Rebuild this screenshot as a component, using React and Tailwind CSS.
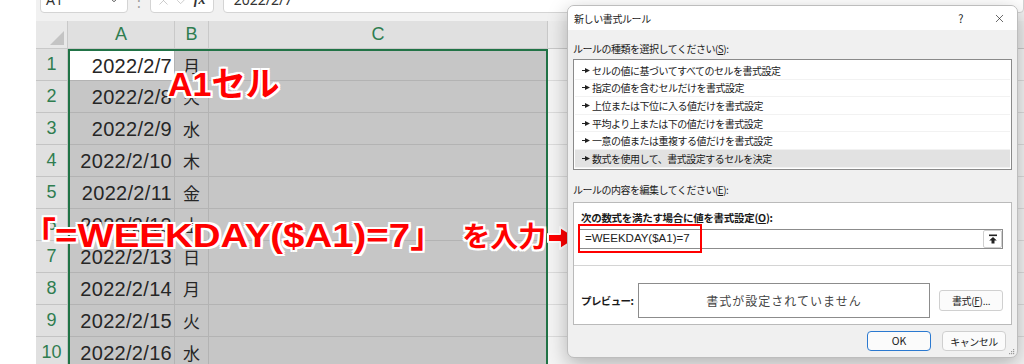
import { Fragment } from 'react';
import { ChevronDown, Check, X } from 'lucide-react';

const rows = [
  ['2022/2/7', '月'],
  ['2022/2/8', '火'],
  ['2022/2/9', '水'],
  ['2022/2/10', '木'],
  ['2022/2/11', '金'],
  ['2022/2/12', '土'],
  ['2022/2/13', '日'],
  ['2022/2/14', '月'],
  ['2022/2/15', '火'],
  ['2022/2/16', '水'],
];

const rules = [
  'セルの値に基づいてすべてのセルを書式設定',
  '指定の値を含むセルだけを書式設定',
  '上位または下位に入る値だけを書式設定',
  '平均より上または下の値だけを書式設定',
  '一意の値または重複する値だけを書式設定',
  '数式を使用して、書式設定するセルを決定',
];

const redText =
  "font-['Liberation_Sans','Noto_Sans_CJK_JP',sans-serif] font-bold leading-none text-[#ff0000] [text-shadow:2px_0_#fff,-2px_0_#fff,0_2px_#fff,0_-2px_#fff,2px_2px_#fff,-2px_-2px_#fff,2px_-2px_#fff,-2px_2px_#fff]";

function FormulaBar() {
  return (
    <div className="flex h-[21px] shrink-0 items-start gap-[9px] overflow-hidden pl-[4px] text-[14px] text-[#333]">
      <div className="-mt-[10px] flex h-[23px] w-[88px] items-end justify-between rounded-[4px] border border-[#d4d4d4] bg-white pb-[2px] pl-[5px] pr-[6px]">
        <span>A1</span>
        <ChevronDown size={14} strokeWidth={1.5} className="mb-[3px]" />
      </div>
      <span className="-mt-[8px] text-[#999]">:</span>
      <div className="-mt-[10px] flex h-[23px] w-[64px] items-end gap-[4px] rounded-[4px] border border-[#d4d4d4] bg-white pb-[2px] pl-[5px]">
        <X size={15} strokeWidth={1.2} className="mb-[2px] text-[#bcbcbc]" />
        <Check size={15} strokeWidth={1.2} className="mb-[2px] text-[#bcbcbc]" />
        <span className="font-['Liberation_Serif',serif] font-bold italic">fx</span>
      </div>
      <div className="-mt-[10px] flex h-[23px] flex-1 items-end rounded-[4px] border border-[#d4d4d4] bg-white pb-[2px] pl-[10px]">
        2022/2/7
      </div>
    </div>
  );
}

function Sheet() {
  return (
    <div className="flex min-h-0 flex-1 flex-col font-['Liberation_Sans','Noto_Sans_CJK_JP',sans-serif]">
      <div className="flex h-[28px] shrink-0 text-[18px] text-[#2f7d50]">
        <div className="relative w-[32px] border-b border-r border-[#c9c9c9] bg-[#e8e8e8]">
          <svg className="absolute bottom-[3px] right-[3px]" width="14" height="14">
            <polygon points="14,0 14,14 0,14" fill="#c4c4c4" />
          </svg>
        </div>
        <div className="flex w-[107px] items-center justify-center border-b border-r border-[#c9c9c9] bg-[#e0e0e0]">A</div>
        <div className="flex w-[34px] items-center justify-center border-b border-r border-[#c9c9c9] bg-[#e0e0e0]">B</div>
        <div className="flex w-[339px] items-center justify-center border-b border-r border-[#c9c9c9] bg-[#e0e0e0]">C</div>
        <div className="flex-1 border-b border-[#c9c9c9] bg-[#ededed]" />
      </div>

      <div className="flex min-h-0 flex-1 overflow-hidden">
        <div className="flex w-[32px] shrink-0 flex-col">
          {rows.map((_, i) => (
            <div
              key={i}
              className="flex h-[32px] shrink-0 items-center justify-center border-b border-r border-[#c4c4c4] bg-[#e0e0e0] text-[18px] text-[#2f7d50]"
            >
              {i + 1}
            </div>
          ))}
        </div>

        <div className="w-[480px] shrink-0 border-x-2 border-t-2 border-[#217346] bg-[#c6c6c6]">
          <div className="grid grid-cols-[105px_34px_1fr]">
            {rows.map(([date, day], i) => (
              <Fragment key={date}>
                <div
                  className={`flex items-center justify-end border-b border-r border-[#b3b3b3] pr-[2px] text-[20px] tracking-[0.3px] text-[#262626] ${
                    i === 0 ? 'h-[30px] bg-white' : 'h-[32px]'
                  }`}
                >
                  {date}
                </div>
                <div
                  className={`flex items-center justify-center border-b border-r border-[#b3b3b3] font-['Noto_Sans_CJK_JP',sans-serif] text-[17px] text-[#262626] ${
                    i === 0 ? 'h-[30px]' : 'h-[32px]'
                  }`}
                >
                  {day}
                </div>
                <div className={`border-b border-[#b3b3b3] ${i === 0 ? 'h-[30px]' : 'h-[32px]'}`} />
              </Fragment>
            ))}
          </div>
        </div>

        <div className="flex flex-1 flex-col bg-[#f4f4f4]">
          {rows.map((_, i) => (
            <div key={i} className="h-[32px] shrink-0 border-b border-[#dcdcdc]" />
          ))}
        </div>
      </div>
    </div>
  );
}

function Dialog() {
  return (
    <div className="absolute left-[567px] top-[5px] flex h-[353px] w-[451px] flex-col overflow-hidden rounded-[7px] border border-[#bdbdbd] bg-[#f0f0f0] font-['Noto_Sans_CJK_JP',sans-serif] text-[#1a1a1a] shadow-[0_6px_20px_rgba(0,0,0,0.28)]">
      <div className="flex h-[24px] shrink-0 items-center bg-white pl-[6px] text-[10px] tracking-[-0.4px]">
        <span className="flex-1">新しい書式ルール</span>
        <span className="mr-[30px] text-[11px]">?</span>
        <X size={13} strokeWidth={1.2} className="mr-[11px]" />
      </div>

      <div className="relative flex flex-1 flex-col px-[5px]">
        <div className="mt-[11px] h-[16px] text-[10px] leading-[16px] tracking-[-0.5px]">
          ルールの種類を選択してください(<span className="underline">S</span>):
        </div>

        <div className="mt-[2px] h-[111px] border border-[#8a8a8a] bg-white px-px pt-[2px]">
          {rules.map((rule, i) => (
            <div
              key={rule}
              className={`flex h-[17.6px] items-center gap-[2px] border-b border-[#f2f2f2] pl-[7px] text-[10px] tracking-[-0.5px] ${
                i === 5 ? 'bg-[#e2e2e2]' : ''
              }`}
            >
              <svg width="8" height="5" viewBox="0 0 8 5">
                <polygon points="0,2 3,2 3,0 8,2.5 3,5 3,3 0,3" fill="#222" />
              </svg>
              {rule}
            </div>
          ))}
        </div>

        <div className="mt-[12px] h-[16px] text-[10px] leading-[16px] tracking-[-0.5px]">
          ルールの内容を編集してください(<span className="underline">E</span>):
        </div>

        <div className="mt-[4px] border border-[#bababa] bg-white">
          <div className="border-b border-[#d4d4d4] pb-[16px] pt-[7px]">
            <div className="h-[16px] pl-[7px] text-[10.5px] font-bold leading-[16px] tracking-[-0.3px]">
              次の数式を満たす場合に値を書式設定(<span className="underline">O</span>):
            </div>
            <div className="relative ml-[5px] mr-[8px] mt-[3px] flex h-[20px] items-center border border-[#8c8c8c] bg-white">
              <span className="flex-1 pl-[5px] font-['Liberation_Sans',sans-serif] text-[11.5px] text-[#222]">
                =WEEKDAY($A1)=7
              </span>
              <div className="flex h-[18px] w-[19px] items-center justify-center rounded-[2px] border border-[#cfcfcf] bg-white">
                <svg width="10" height="10" viewBox="0 0 10 10">
                  <rect x="1" y="0.5" width="8" height="1.6" fill="#222" />
                  <polygon points="5,3 1.2,6.6 3.5,6.6 3.5,9.5 6.5,9.5 6.5,6.6 8.8,6.6" fill="#222" />
                </svg>
              </div>
              <div className="absolute -left-[2px] -top-[6px] h-[29px] w-[124px] border-2 border-[#ff0000]" />
            </div>
          </div>

          <div className="flex items-center pb-[6px] pl-[7px] pt-[17px]">
            <span className="w-[57px] text-[10.5px] font-bold tracking-[-0.6px]">プレビュー:</span>
            <div className="flex h-[35px] w-[292px] items-center justify-center border border-[#8c8c8c] text-[12px] tracking-[1px] text-[#444]">
              書式が設定されていません
            </div>
            <button className="ml-[9px] h-[21px] w-[64px] rounded-[3px] border border-[#d0d0d0] bg-[#fbfbfb] text-[10px] tracking-[-0.3px]">
              書式(<span className="underline">F</span>)...
            </button>
          </div>
        </div>

        <div className="mt-[6px] flex justify-end gap-[11px] pr-[6px]">
          <button className="h-[20px] w-[64px] rounded-[4px] border-[1.5px] border-[#2b79d0] bg-[#fbfbfb] text-[10.5px]">
            OK
          </button>
          <button className="h-[20px] w-[64px] rounded-[4px] border border-[#cfcfcf] bg-[#fbfbfb] text-[10px] tracking-[-0.5px]">
            キャンセル
          </button>
        </div>

        <svg className="absolute bottom-[2px] right-[2px]" width="7" height="7" viewBox="0 0 7 7">
          <rect x="5" y="1" width="1.2" height="1.2" fill="#9a9a9a" />
          <rect x="3" y="3" width="1.2" height="1.2" fill="#9a9a9a" />
          <rect x="5" y="3" width="1.2" height="1.2" fill="#9a9a9a" />
          <rect x="1" y="5" width="1.2" height="1.2" fill="#9a9a9a" />
          <rect x="3" y="5" width="1.2" height="1.2" fill="#9a9a9a" />
          <rect x="5" y="5" width="1.2" height="1.2" fill="#9a9a9a" />
        </svg>
      </div>
    </div>
  );
}

export default function App() {
  return (
    <div className="relative h-[364px] w-[1024px] overflow-hidden bg-white">
      <div className="flex h-full">
        <div className="w-[36px] shrink-0 bg-white" />
        <div className="flex min-w-0 flex-1 flex-col bg-[#f1f1f1]">
          <FormulaBar />
          <Sheet />
        </div>
      </div>

      <div className={`absolute left-[168px] top-[67px] text-[34px] ${redText}`}>A1セル</div>
      <div className={`absolute left-[22px] top-[218px] flex items-baseline whitespace-nowrap text-[34px] ${redText}`}>
        <span>「</span>
        <span className="-ml-[1px] mr-[41px] inline-block origin-left [transform:scaleX(1.13)]">=WEEKDAY($A1)=7</span>
        <span>」</span>
        <span className="ml-[18px] text-[28px]">を入力</span>
      </div>
      <svg className="absolute left-[547px] top-[226px]" width="32" height="25" viewBox="0 0 32 25">
        <polygon
          points="1,8 13,8 13,1 30,12 13,23 13,16 1,16"
          fill="#ff0000"
          stroke="#fff"
          strokeWidth="2"
          strokeLinejoin="round"
        />
      </svg>

      <Dialog />
    </div>
  );
}
